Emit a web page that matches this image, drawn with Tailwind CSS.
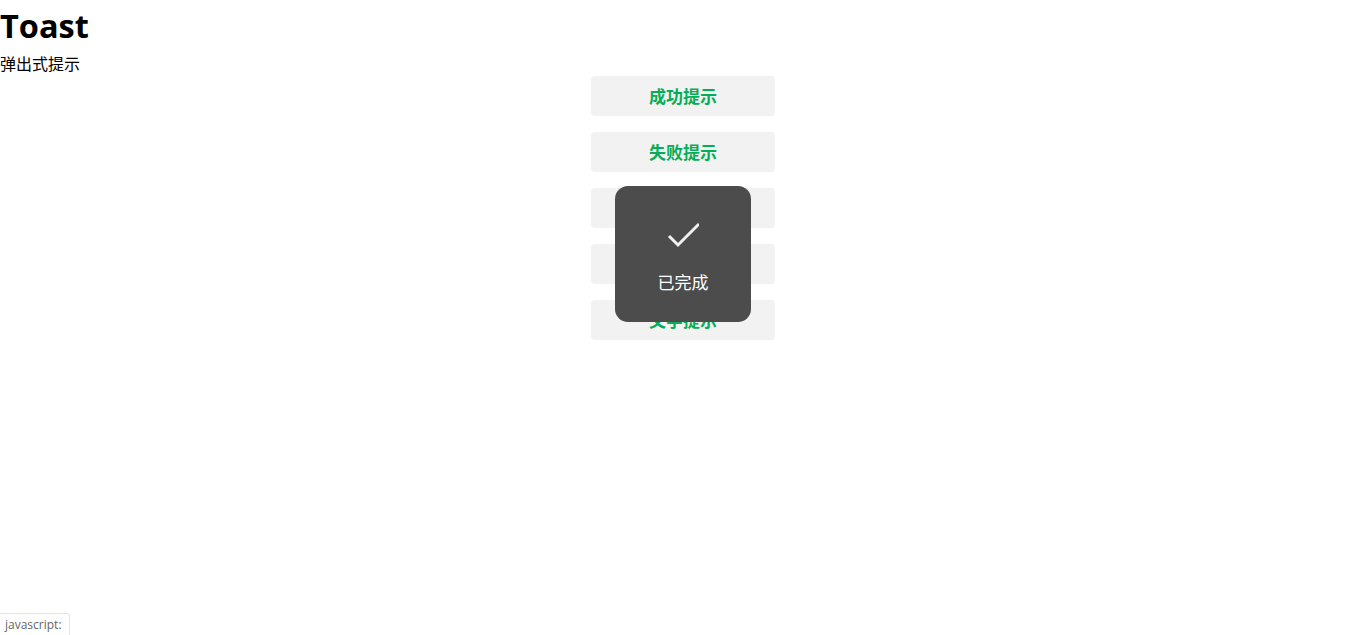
<!DOCTYPE html>
<html lang="zh">
<head>
<meta charset="utf-8">
<script src="https://cdn.jsdelivr.net/npm/@tailwindcss/browser@4"></script>
<title>Toast</title>
</head>
<body class="relative h-[635px] overflow-hidden bg-white text-black font-['Open_Sans','Noto_Sans_CJK_SC',sans-serif]">
  <h1 class="text-[32.5px] leading-[44px] pt-1 font-bold h-[52px]">Toast</h1>
  <p class="text-base leading-[24px] h-[24px]">弹出式提示</p>
  <div class="flex flex-col items-center gap-4">
    <button class="w-[184px] h-10 pt-[1px] rounded-[4px] bg-[#f2f2f2] text-[17px] leading-10 font-bold text-[#05ad57]">成功提示</button>
    <button class="w-[184px] h-10 pt-[1px] rounded-[4px] bg-[#f2f2f2] text-[17px] leading-10 font-bold text-[#05ad57]">失败提示</button>
    <button class="w-[184px] h-10 rounded-[4px] bg-[#f2f2f2]"></button>
    <button class="w-[184px] h-10 rounded-[4px] bg-[#f2f2f2]"></button>
    <button class="w-[184px] h-10 pt-[1px] rounded-[4px] bg-[#f2f2f2] text-[17px] leading-10 font-bold text-[#05ad57]">文字提示</button>
  </div>
  <div class="absolute left-[615px] top-[186px] w-[136px] h-[136px] rounded-[13px] bg-[#4c4c4c] text-white flex flex-col items-center">
    <svg class="mt-[34px] w-8 h-8" viewBox="0 0 32 32" fill="none" stroke="#f2f2f2" stroke-width="3"><path d="M2 16 L11 25 L32 4"/></svg>
    <span class="mt-[19px] text-[17px] leading-6 font-normal">已完成</span>
  </div>
  <div class="absolute left-0 bottom-0 h-[22px] w-[70px] pl-[5px] border-t border-r border-[#e3e3e3] rounded-tr-[4px] bg-white text-[12px] leading-[21px] text-[#666]">javascript:</div>
</body>
</html>
